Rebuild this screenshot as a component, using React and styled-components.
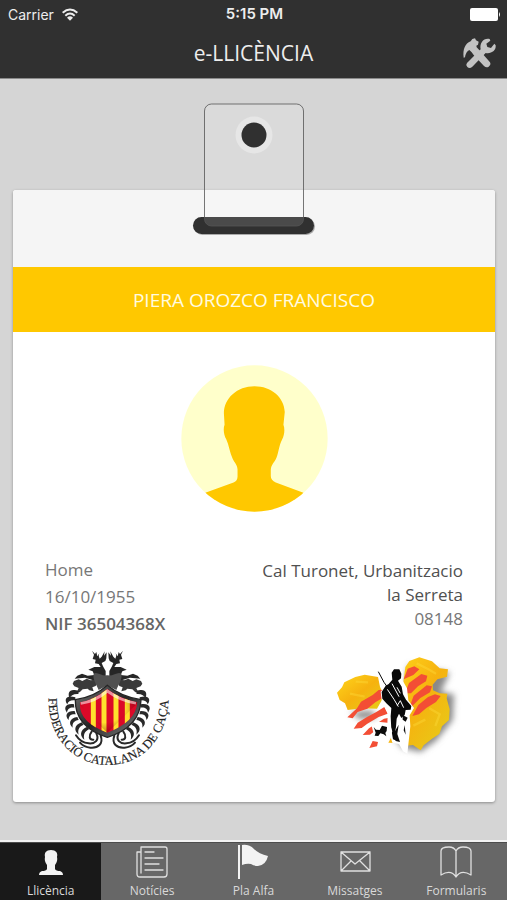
import React from 'react';
import styled, { createGlobalStyle } from 'styled-components';

const GlobalStyle = createGlobalStyle`
* {
  box-sizing: border-box;
}
body {
  margin: 0;
  background: #d5d5d5;
  font-family: "Open Sans", "Noto Sans", sans-serif;
}
`

const Container = styled.div`
min-height: 100vh;
display: flex;
flex-direction: column;
`

const TopBar = styled.header`
background: #303030;
color: #ededed;
border-bottom: 1px solid #8a8a8a;
`

const StatusBar = styled.div`
display: grid;
grid-template-columns: 1fr auto 1fr;
align-items: center;
height: 28px;
padding: 0 6px 0 8px;
font-family: Inter, "Liberation Sans", sans-serif;
font-size: 14px;
`

const Carrier = styled.span`
display: flex;
align-items: center;
gap: 8px;
`

const Clock = styled.time`
font-size: 15px;
line-height: 18px;
font-weight: 600;
`

const Battery = styled.svg`
justify-self: end;
width: 31px;
height: 13px;
`

const NavBar = styled.div`
display: grid;
grid-template-columns: 56px 1fr 56px;
align-items: center;
height: 50px;
`

const Title = styled.h1`
grid-column: 2;
margin: 0;
text-align: center;
font-size: 21px;
line-height: 28px;
font-weight: 400;
`

const ToolsButton = styled.button`
display: flex;
justify-content: center;
padding: 0;
border: none;
background: none;
cursor: pointer;
`

const Main = styled.main`
flex: 1;
padding: 111px 12px 38px 13px;
`

const Card = styled.article`
background: white;
border-radius: 3px;
box-shadow: 0 1px 3px rgba(0, 0, 0, 0.35);
`

const CardTop = styled.div`
position: relative;
height: 77px;
background: #f5f5f5;
border-radius: 3px 3px 0 0;
`

/* the clip hangs over the upper edge of the card */
const Clip = styled.svg`
position: absolute;
left: 50%;
bottom: 27px;
width: 126px;
height: 140px;
transform: translateX(-50%);
`

const Name = styled.h2`
margin: 0;
padding-top: 1px;
background: #ffc800;
color: #fffbe0;
text-align: center;
font-size: 19px;
font-weight: 400;
line-height: 64px;
`

const Avatar = styled.svg`
display: block;
width: 147px;
height: 147px;
margin: 33px auto 44px;
`

const Details = styled.div`
display: flex;
justify-content: space-between;
padding: 0 32px;
font-size: 17px;
color: #777;
`

const Holder = styled.div`
line-height: 27px;
`

const Address = styled.address`
max-width: 210px;
font-style: normal;
text-align: right;
line-height: 24px;
padding-top: 3px;
`

const Street = styled.div`
color: #505050;
`

const Nif = styled.div`
color: #666;
font-weight: 600;
`

const Logos = styled.div`
display: flex;
justify-content: space-between;
padding: 2px 25px 23px 22px;
`

const Logo = styled.svg`
width: 145px;
height: 140px;
`

const CrestText = styled.text`
font-family: "Liberation Serif", serif;
font-size: 38px;
fill: #222;
stroke: #222;
stroke-width: 0.5px;
`

const TabBar = styled.nav`
display: grid;
grid-template-columns: repeat(5, 1fr);
height: 60px;
border-top: 2px solid #f2f2f2;
background: #676767;
`

const Tab = styled.button`
display: flex;
flex-direction: column;
align-items: center;
justify-content: space-between;
padding: 2px 0 1px;
border: none;
background: ${props => props.$active ? '#191919' : '#676767'};
color: #d9d9d9;
font-family: inherit;
font-size: 12px;
line-height: 17px;
box-shadow: inset 0 1px 0 #4c4c4c;
cursor: pointer;
`

const TabIcon = styled.svg`
width: 36px;
height: 36px;
fill: none;
stroke: #e0e0e0;
stroke-width: 1.3;
stroke-linejoin: round;
stroke-linecap: round;
`

const ToolsIcon = () => (
    <svg width="35" height="33" viewBox="1384 108 105 99" fill="#c3c3c3" aria-hidden="true">
        <path d="M1389 170C1386 145 1393 128 1410 121L1415 114L1423 112L1426 118L1434 122L1432 131L1427 134L1428 139L1435 146L1468 184Q1472 191 1464 197Q1457 202 1450 195L1419 162L1413 154L1406 147Q1396 151 1393 169Z" />
        <path d="M1399 186L1440 145C1436 126 1449 110 1467 114L1469 119L1457 128L1460 138L1471 141L1481 128L1485 133C1487 149 1472 159 1455 156L1415 197Q1407 204 1400 198Q1394 192 1399 186Z" />
    </svg>
)

const WifiIcon = () => (
    <svg width="16" height="13" viewBox="0 0 48 37" fill="none" stroke="#ededed" strokeWidth="6" aria-hidden="true">
        <path d="M2 13Q24 -6 46 13M10 22Q24 9 38 22" />
        <path d="M15 28Q24 20 33 28L24 37Z" fill="#ededed" stroke="none" />
    </svg>
)

const BadgeClip = () => (
    <Clip viewBox="0 0 126 140" aria-hidden="true">
        <rect x="3" y="118" width="121" height="17" rx="8.5" fill="#aaa" />
        <rect x="2" y="117" width="121" height="17" rx="8.5" fill="#303030" />
        <rect x="13.5" y="4" width="99" height="122" rx="7" fill="#fff" fillOpacity="0.13" stroke="#555" strokeOpacity="0.8" />
        <circle cx="63" cy="35" r="18.5" fill="#e6e6e6" />
        <circle cx="63" cy="35" r="12.5" fill="#303030" />
    </Clip>
)

const Portrait = () => (
    <Avatar viewBox="32 28 442 442" role="img" aria-label="Foto">
        <defs>
            <clipPath id="portrait"><circle cx="253" cy="249" r="220" /></clipPath>
        </defs>
        <circle cx="253" cy="249" r="220" fill="#ffffcb" />
        <path clipPath="url(#portrait)" fill="#ffc800" d="M253 92C201 92 161 128 161 174L163 208C158 220 161 240 168 251C176 268 179 292 187 309C193 323 201 326 202 342V363Q202 376 190 381L105 412V475H400V412L317 381Q302 375 302 362V343C303 327 313 322 319 307C326 291 326 271 336 252C343 239 345 220 340 208L344 169C342 125 303 92 253 92Z" />
    </Avatar>
)

// left half of the ornaments around the shield, the right half is its mirror
const Foliage = () => (
    <g>
        <path fill="#262626" d="M171 35L177 47L173 60L182 62L180 73L191 75L197 84L178 84L160 92L173 97L178 108L158 110L141 104L127 110L119 119L150 116L180 125L212 112L212 96L204 82L200 72L211 66L214 58L215 40L207 50L209 37L200 53L194 59L191 50L193 43L187 52L184 39L180 45Z" />
        <path fill="#3a3a3a" d="M117 126L131 121L142 126L155 119L167 124L180 122L187 130L182 141L172 145L176 157L163 154L158 149L143 151L134 160L126 158L131 147L118 142L113 134Z" />
        <g fill="#292929">
            <path d="M132 156C104 146 96 160 104 178C107 169 116 164 130 165Z" />
            <path d="M121 175C94 166 86 181 97 196C99 186 109 182 121 184Z" />
            <path d="M117 196C91 192 85 208 96 221C97 210 106 204 118 206Z" />
            <path d="M119 216C95 215 88 230 101 243C101 230 108 225 122 226Z" />
            <path d="M127 234C104 237 99 254 113 266C111 252 118 245 131 243Z" />
            <path d="M140 250C117 258 116 276 131 287C127 271 133 262 146 257Z" />
            <path d="M155 264C134 274 134 291 148 302C144 287 149 277 163 270Z" />
        </g>
        <g fill="none" stroke="#292929" strokeWidth="6" strokeLinecap="round">
            <path d="M170 278C160 291 163 303 175 302" />
            <path d="M184 283C194 303 180 315 161 313C143 312 131 302 123 289" />
            <path d="M197 290C206 315 189 328 166 326C150 325 141 318 135 311" />
        </g>
    </g>
)

const FederationLogo = () => (
    <Logo viewBox="0 0 435 420" role="img" aria-label="Federació Catalana de Caça">
        <defs>
            <path id="motto" d="M41 177C38 292 112 378 219 378C326 378 399 293 401 174V100" />
            <clipPath id="shield"><path d="M217 150Q177 183 135 190Q129 249 217 281Q303 249 307 190Q258 181 217 150Z" /></clipPath>
            <linearGradient id="steel" x1="0" y1="0" x2="1" y2="1">
                <stop offset="0" stopColor="#777" />
                <stop offset="0.5" stopColor="#252525" />
                <stop offset="1" stopColor="#888" />
            </linearGradient>
            <radialGradient id="gloss" cx="0.45" cy="0.45" r="0.65">
                <stop offset="0.5" stopColor="#600" stopOpacity="0" />
                <stop offset="1" stopColor="#600" stopOpacity="0.6" />
            </radialGradient>
        </defs>
        <Foliage />
        <g transform="translate(435 0) scale(-1 1)"><Foliage /></g>
        <path d="M176 104C186 96 199 112 217 109C236 112 249 96 259 104C263 122 250 136 244 153L217 139L191 153C185 136 172 122 176 104Z" fill="#505050" />
        <path d="M217 139Q177 175 121 182Q119 263 217 295Q316 263 318 182Q259 174 217 139Z" fill="url(#steel)" stroke="#242424" strokeWidth="4" />
        <g clipPath="url(#shield)">
            <rect x="120" y="140" width="200" height="150" fill="#dc0928" />
            <path stroke="#ffe12d" strokeWidth="15" d="M175 140V290M207 140V290M243 140V290M277 140V290" />
            <path d="M125 190L217 145L310 190L217 281Z" fill="url(#gloss)" />
            <path d="M137 193Q180 187 217 156Q258 186 303 192" fill="none" stroke="#fff" strokeWidth="9" opacity="0.55" />
        </g>
        <CrestText><textPath href="#motto">FEDERACIÓ CATALANA DE CAÇA</textPath></CrestText>
    </Logo>
)

const HunterLogo = () => (
    <Logo viewBox="0 0 435 420" role="img" aria-label="Societat de caçadors">
        <defs>
            <filter id="soft" x="-20%" y="-20%" width="140%" height="140%"><feGaussianBlur stdDeviation="9" /></filter>
            <linearGradient id="land" x1="0" y1="0" x2="1" y2="1">
                <stop offset="0" stopColor="#ffd71c" />
                <stop offset="0.5" stopColor="#f6b20f" />
                <stop offset="1" stopColor="#e5ce19" />
            </linearGradient>
        </defs>
        <path filter="url(#soft)" fill="#888" d="M251 79L374 101L347 160L387 166L383 243L333 305L286 339L233 327L205 291ZM75 218L141 215L156 236L105 240Z" />
        <path fill="url(#land)" d="M36 161L51 145L58 130L91 114L119 107L159 114L165 143L177 172L156 209L111 208L68 213L60 193L44 183Z" />
        <path fill="url(#land)" d="M241 84L253 66L283 55L321 67L344 88L369 91L366 113L337 121L323 137L324 154L344 163L367 164L365 178L374 211L372 243L351 262L343 285L321 299L296 319L287 334L264 318L238 321L223 312L190 311L204 286L229 260L245 203L234 139Z" />
        <path fill="none" stroke="#ffe040" strokeWidth="7" opacity="0.35" d="M275 73L309 90L333 104M313 208L344 226L331 261M265 260L301 242M92 128L129 130M75 164L119 173" />
        <path fill="#f34e35" d="M67 235L96 208L108 188L143 168L161 153L180 152L174 176L151 190L127 209L98 219L83 238ZM86 269L98 251L126 234L154 219L178 204L188 224L161 234L127 254L110 267ZM113 288L132 268L177 239L193 236L190 254L157 270L135 287ZM133 327L143 306L159 309L156 322ZM236 121L248 89L268 82L283 91L265 108ZM240 163L252 132L289 105L307 110L303 127L279 142L258 163ZM255 200L266 170L305 139L321 142L315 160L286 177L263 200ZM262 231L280 198L309 174L330 166L347 171L333 189L304 207L282 226ZM218 258L232 247L239 252L230 265Z" />
        <path fill="#fff" d="M199 91L224 84L234 98L232 123L246 148L250 184L267 207L254 229L256 262L247 344L234 337L222 315L202 311L187 261L188 222L171 189L167 158L182 140L196 130Z" />
        <path fill="#090909" d="M200 101L207 91L223 91L229 104L228 118L219 125L230 143L234 166L243 182L259 201L257 212L242 213L239 228L229 237L222 224L215 239L213 264L210 280L216 306L204 301L199 272L197 232L199 207L184 193L172 179L170 159L182 140L191 135L202 122Z" />
        <path fill="none" stroke="#090909" strokeWidth="3" d="M160 98L177 130L190 148" />
        <path fill="none" stroke="#fff" strokeWidth="3" d="M187 151L207 181L220 203M201 134L222 173M216 145L226 163M217 199L226 185L236 206" />
        <path fill="#fff" d="M140 261L159 248L194 252L202 277L192 301L176 302L161 294L149 296Z" />
        <path fill="#0b0b0b" d="M146 264L153 272L164 273L171 260L186 264L185 276L181 282L184 292L176 286L166 283L160 291L149 290L152 281ZM233 228L248 236L242 248L233 242ZM239 258L242 287L236 274ZM221 257L217 285L225 309L212 306L208 280Z" />
    </Logo>
)

// every icon is drawn in a 36x36 box
const icons = {
    licence: <path fill="#f3f3f3" stroke="none" d="M18 6C13 6 11 9 12 13Q11 17 14 21V25Q13 27 9 27Q6 28 6 31H30Q30 28 27 27Q23 27 22 25V21Q25 17 24 13C25 9 23 6 18 6Z" />,
    news: <path d="M7 3H31Q33 3 33 5V30Q33 33 30 33H6Q3 33 3 30V8H6M7 3V29M11 8H20M11 14H29M11 20H25M11 26H29" />,
    flag: <path fill="#f3f3f3" stroke="none" d="M3 1H5V35H3ZM7 1Q14 0 19 5T33 12Q31 21 23 22Q19 22 16 20Q12 19 7 21Z" />,
    mail: <path d="M4 8H33V27H4ZM4 8L18 20L33 8M4 27L14 17M33 27L23 17" />,
    book: <path d="M18 7Q16 3 11 3Q3 3 3 7V31Q13 25 18 33Q23 25 33 31V7Q33 3 25 3Q20 3 18 7V33" />,
}

const tabs = [
    { id: 'licence', label: 'Llicència' },
    { id: 'news', label: 'Notícies' },
    { id: 'flag', label: 'Pla Alfa' },
    { id: 'mail', label: 'Missatges' },
    { id: 'book', label: 'Formularis' },
]

class App extends React.Component {
    state = {
        activeTab: 'licence',
    }

    render() {
        return (
            <Container>
                <GlobalStyle />
                <TopBar>
                    <StatusBar>
                        <Carrier>Carrier <WifiIcon /></Carrier>
                        <Clock>5:15 PM</Clock>
                        <Battery viewBox="0 0 31 13" fill="#fff" aria-hidden="true">
                            <rect x="0" y="0" width="28" height="13" rx="2" />
                            <path d="M29 4Q31 6.500 29 9Z" />
                        </Battery>
                    </StatusBar>
                    <NavBar>
                        <Title>e-LLICÈNCIA</Title>
                        <ToolsButton type="button" aria-label="Configuració"><ToolsIcon /></ToolsButton>
                    </NavBar>
                </TopBar>

                <Main>
                    <Card>
                        <CardTop><BadgeClip /></CardTop>
                        <Name>PIERA OROZCO FRANCISCO</Name>
                        <Portrait />
                        <Details>
                            <Holder>
                                <div>Home</div>
                                <div>16/10/1955</div>
                                <Nif>NIF 36504368X</Nif>
                            </Holder>
                            <Address>
                                <Street>Cal Turonet, Urbanitzacio la Serreta</Street>
                                <div>08148</div>
                            </Address>
                        </Details>
                        <Logos>
                            <FederationLogo />
                            <HunterLogo />
                        </Logos>
                    </Card>
                </Main>

                <TabBar>
                    {tabs.map(tab => (
                        <Tab
                            key={tab.id}
                            type="button"
                            $active={tab.id === this.state.activeTab}
                            onClick={() => this.setState({ activeTab: tab.id })}
                        >
                            <TabIcon viewBox="0 0 36 36" aria-hidden="true">{icons[tab.id]}</TabIcon>
                            {tab.label}
                        </Tab>
                    ))}
                </TabBar>
            </Container>
        )
    }
};

export default App;
